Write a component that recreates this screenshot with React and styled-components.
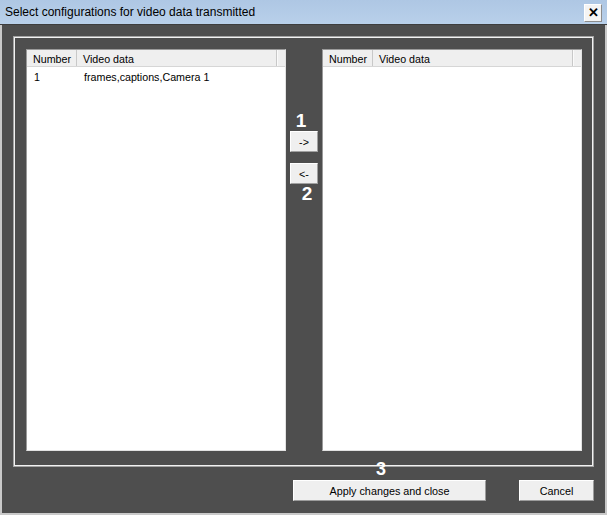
import styled, { createGlobalStyle } from 'styled-components'

const GlobalStyle = createGlobalStyle`
    html, body {
        margin: 0;
        padding: 0;
        background: #4e4e4e;
    }
    * {
        box-sizing: border-box;
    }
`

const columns = [
    { name: 'Number', width: 50 },
    { name: 'Video data', width: 200 },
]

const leftRows = [
    { number: '1', data: 'frames,captions,Camera 1' },
]

const ListView = ({ rows }) => (
    <List>
        <Header>
            {columns.map((col) => (
                <HeaderCell key={col.name} $width={col.width}>{col.name}</HeaderCell>
            ))}
            <HeaderFiller />
        </Header>
        {rows.map((row) => (
            <Row key={row.number}>
                <Cell $width={columns[0].width}>{row.number}</Cell>
                <Cell $width={columns[1].width}>{row.data}</Cell>
            </Row>
        ))}
    </List>
)

const App = () => {
    return (
        <>
            <GlobalStyle />
            <Window>
                <TitleBar>
                    <Title>Select configurations for video data transmitted</Title>
                    <CloseButton>✕</CloseButton>
                </TitleBar>
                <Body>
                    <GroupBox>
                        <ListView rows={leftRows} />
                        <Middle>
                            <Marker $shift={-3}>1</Marker>
                            <ArrowButton>-&gt;</ArrowButton>
                            <ArrowButton $gap={11}>&lt;-</ArrowButton>
                            <Marker $shift={3}>2</Marker>
                        </Middle>
                        <ListView rows={[]} />
                    </GroupBox>
                    <Footer>
                        <DialogButton $width={193}>
                            Apply changes and close
                            <Badge>3</Badge>
                        </DialogButton>
                        <DialogButton $width={75}>Cancel</DialogButton>
                    </Footer>
                </Body>
            </Window>
        </>
    )
}

export default App

const Window = styled.div`
    width: 607px;
    height: 515px;
    display: flex;
    flex-direction: column;
    background: #4e4e4e;
    border-left: 2px solid #c9c9c9;
    border-right: 2px solid #c9c9c9;
    border-bottom: 2px solid #c9c9c9;
    font-family: "Liberation Sans", Arial, sans-serif;
`

const TitleBar = styled.div`
    height: 25px;
    margin: 0 -2px;
    display: flex;
    align-items: center;
    justify-content: space-between;
    padding: 0 5px 0 5px;
    background: linear-gradient(#aec7e4, #b9d0ea);
    border-bottom: 1px solid #3e3e3e;
`

const Title = styled.div`
    font-size: 12px;
    color: #000;
    white-space: nowrap;
`

const CloseButton = styled.div`
    width: 18px;
    height: 18px;
    margin-top: 1px;
    display: flex;
    align-items: center;
    justify-content: center;
    background: #f4f4f4;
    border: 1px solid #8c8c8c;
    border-top-color: #fff;
    border-left-color: #fff;
    font-size: 13px;
    font-weight: 700;
    color: #000;
`

const Body = styled.div`
    flex: 1;
    display: flex;
    flex-direction: column;
    padding: 11px 11px 0 11px;
`

const GroupBox = styled.div`
    height: 431px;
    display: grid;
    grid-template-columns: 260px 36px 260px;
    padding: 12px 11px 15px 12px;
    border: 1px solid #a3a3a3;
    box-shadow: inset 0 0 0 1px #f2f2f2;
`

const List = styled.div`
    display: flex;
    flex-direction: column;
    background: #fff;
    border: 1px solid #9a9a9a;
    border-right-color: #e2e2e2;
    border-bottom-color: #e2e2e2;
    font-size: 10.7px;
    color: #000;
`

const Header = styled.div`
    display: flex;
    height: 17px;
    background: #efefef;
    border-bottom: 1px solid #d6d6d6;
`

const HeaderCell = styled.div`
    width: ${(p) => p.$width}px;
    flex-shrink: 0;
    padding: 3px 0 0 6px;
    border-right: 1px solid #c8c8c8;
    white-space: nowrap;
`

const HeaderFiller = styled.div`
    flex: 1;
    border-left: 1px solid #fafafa;
`

const Row = styled.div`
    display: flex;
    height: 19px;
    align-items: center;
`

const Cell = styled.div`
    width: ${(p) => p.$width}px;
    flex-shrink: 0;
    padding-left: 7px;
    white-space: nowrap;
`

const Middle = styled.div`
    display: flex;
    flex-direction: column;
    align-items: center;
    padding-top: 62px;
`

const Marker = styled.div`
    height: 20px;
    line-height: 20px;
    font-size: 19px;
    font-weight: 700;
    color: #fff;
    transform: translateX(${(p) => p.$shift}px);
`

const ArrowButton = styled.div`
    width: 28px;
    height: 21px;
    margin-top: ${(p) => p.$gap || 0}px;
    display: flex;
    align-items: center;
    justify-content: center;
    background: #efefef;
    border: 1px solid #a0a0a0;
    border-top-color: #fff;
    border-left-color: #fff;
    font-size: 10.7px;
    color: #000;
`

const Footer = styled.div`
    display: flex;
    justify-content: flex-end;
    gap: 33px;
    padding: 13px 0 0 0;
`

const DialogButton = styled.div`
    position: relative;
    width: ${(p) => p.$width}px;
    height: 21px;
    display: flex;
    align-items: center;
    justify-content: center;
    background: #efefef;
    border: 1px solid #9c9c9c;
    border-top-color: #fff;
    border-left-color: #fff;
    font-size: 10.8px;
    color: #000;
`

const Badge = styled.span`
    position: absolute;
    left: 82px;
    top: -21px;
    font-size: 18px;
    line-height: 18px;
    font-weight: 700;
    color: #fff;
`
